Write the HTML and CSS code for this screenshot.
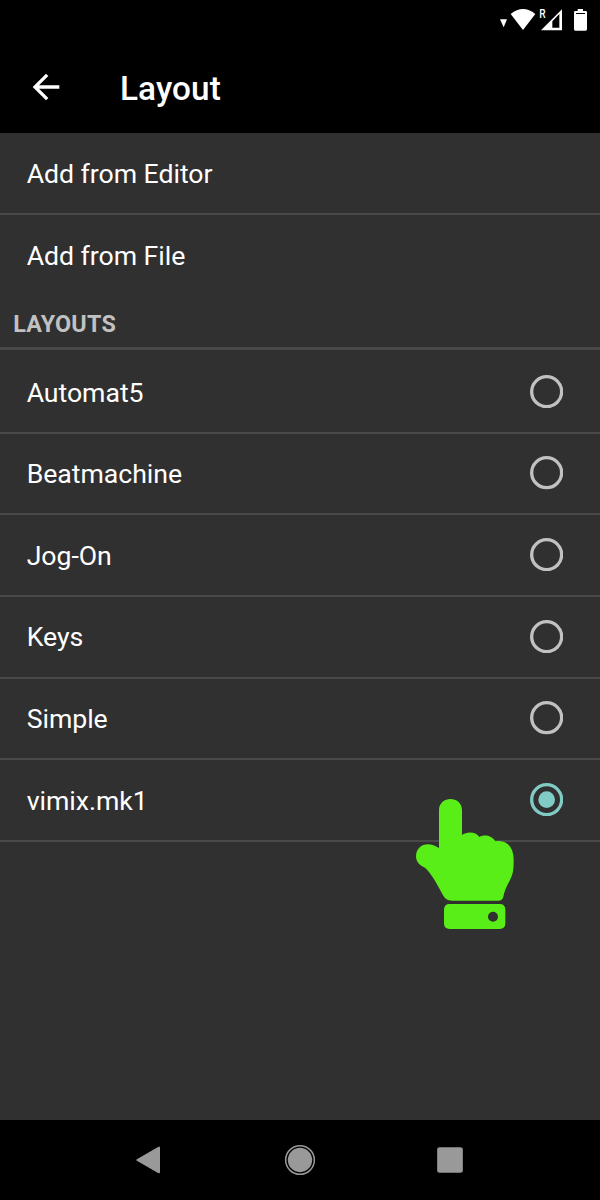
FILE: index.html
```html
<!DOCTYPE html>
<html lang="en">
<head>
<meta charset="utf-8">
<title>Layout</title>
<link rel="stylesheet" href="styles.css">
</head>
<body>
<div class="screen">
  <header class="top">
    <div class="status">
      <svg class="status-icons" viewBox="0 0 330 120" fill="#fff">
        <path d="M30 58H51L41 82Z"/>
        <path d="M62 42Q99 12 136 42L99 90Z"/>
        <text class="roaming" transform="translate(148 54) scale(.8 1)">R</text>
        <path fill-rule="evenodd" d="M153 91L216 28V91ZM187 64V83H208V42Z"/>
        <path fill-rule="evenodd" d="M263 27H279V33H287Q291 33 291 37V88Q291 92 287 92H256Q252 92 252 88V37Q252 33 256 33H263ZM258 39V42H285V39Z"/>
      </svg>
    </div>
    <div class="toolbar">
      <svg class="back" viewBox="0 0 24 24" fill="#fff"><path d="M20 11H7.83l5.59-5.59L12 4l-8 8 8 8 1.41-1.41L7.83 13H20z"/></svg>
      <h1 class="title">Layout</h1>
    </div>
  </header>
  <main class="content">
    <ul class="list">
      <li class="row">Add from Editor</li>
      <li class="row row-last">Add from File</li>
    </ul>
    <h2 class="section">LAYOUTS</h2>
    <ul class="list">
      <li class="row row-first">Automat5<svg class="radio" viewBox="0 0 20 20"><circle class="ring" cx="10" cy="10" r="9"/></svg></li>
      <li class="row">Beatmachine<svg class="radio" viewBox="0 0 20 20"><circle class="ring" cx="10" cy="10" r="9"/></svg></li>
      <li class="row">Jog-On<svg class="radio" viewBox="0 0 20 20"><circle class="ring" cx="10" cy="10" r="9"/></svg></li>
      <li class="row">Keys<svg class="radio" viewBox="0 0 20 20"><circle class="ring" cx="10" cy="10" r="9"/></svg></li>
      <li class="row">Simple<svg class="radio" viewBox="0 0 20 20"><circle class="ring" cx="10" cy="10" r="9"/></svg></li>
      <li class="row">vimix.mk1<svg class="radio radio-on" viewBox="0 0 20 20"><circle class="ring" cx="10" cy="10" r="9"/><circle class="dot" cx="10" cy="10" r="5"/></svg></li>
    </ul>
  </main>
  <nav class="nav">
    <svg class="nav-icon" viewBox="0 0 120 120" fill="#999"><path stroke="#999" stroke-width="6" stroke-linejoin="round" d="M22 60L87 23V97Z"/></svg>
    <svg class="nav-icon" viewBox="0 0 120 120" fill="#999"><circle cx="60" cy="60" r="36.5"/><circle cx="60" cy="60" r="43" fill="none" stroke="#999" stroke-width="4.5"/></svg>
    <svg class="nav-icon" viewBox="0 0 120 120" fill="#999"><rect x="21.5" y="21.5" width="77" height="77" rx="7"/></svg>
  </nav>
  <svg class="pointer" viewBox="45 54 300 396" fill="#59ee17">
    <path d="M117 204V91C117 46 186 46 186 91V165C199 154 228 154 238 171C251 162 276 166 286 184C323 177 341 205 341 239C341 267 340 281 329 302C318 321 313 335 310 350Q307 362 295 362H157C140 362 132 353 125 338C112 313 94 280 75 263C59 257 48 245 48 229C48 194 85 181 117 204Z"/>
    <path fill-rule="evenodd" d="M149 372H299Q316 372 316 389V430Q316 447 299 447H149Q132 447 132 430V389Q132 372 149 372ZM294 410A15 15 0 1 0 264 410A15 15 0 1 0 294 410Z"/>
  </svg>
</div>
</body>
</html>
```
FILE: styles.css
```css
* { box-sizing: border-box; }

body {
  margin: 0;
  background: #000;
  font-family: Roboto, "Liberation Sans", sans-serif;
  color: #fff;
}

.screen {
  position: relative;
  display: flex;
  flex-direction: column;
  width: 600px;
  height: 1200px;
  overflow: hidden;
}

.top { background: #000; }

.status {
  display: flex;
  justify-content: flex-end;
  height: 40px;
}

.status-icons { width: 110px; height: 40px; }

.roaming { font-size: 38px; font-weight: 500; }

.toolbar {
  display: flex;
  align-items: center;
  height: 93.33px;
  padding-left: 26px;
}

.back { width: 40px; height: 40px; }

.title {
  margin: 4px 0 0 54px;
  font-size: 33.33px;
  font-weight: 500;
  line-height: 40px;
  letter-spacing: 0.1px;
}

.content { flex: 1; background: #303030; }

.list { margin: 0; padding: 0; list-style: none; }

.row {
  display: flex;
  align-items: center;
  justify-content: space-between;
  height: 81.67px;
  padding: 1px 36.67px 0 26.67px;
  border-bottom: 2px solid #494949;
  font-size: 26.67px;
  line-height: 32px;
  letter-spacing: -0.04px;
}

.row-first { padding-top: 2px; }

.row-last {
  padding-top: 3px;
  border-bottom-color: transparent;
}

.section {
  height: 53.67px;
  margin: 0 0 1.67px;
  padding: 13px 13.33px 0;
  border-bottom: 3px solid #494949;
  color: #c1c1c1;
  font-size: 23.33px;
  font-weight: 700;
  line-height: 28px;
  letter-spacing: 0.2px;
}

.radio {
  width: 33.33px;
  height: 33.33px;
  margin-bottom: 2px;
  color: #c1c1c1;
}

.radio-on { color: #80cbc4; }

.ring {
  fill: none;
  stroke: currentColor;
  stroke-width: 2;
}

.dot { fill: currentColor; }

.nav {
  display: flex;
  justify-content: center;
  gap: 110px;
  height: 80px;
  padding-top: 20px;
  background: #000;
}

.nav-icon { width: 40px; height: 40px; }

.pointer {
  position: absolute;
  left: 415px;
  top: 798px;
  width: 100px;
  height: 132px;
}
```
